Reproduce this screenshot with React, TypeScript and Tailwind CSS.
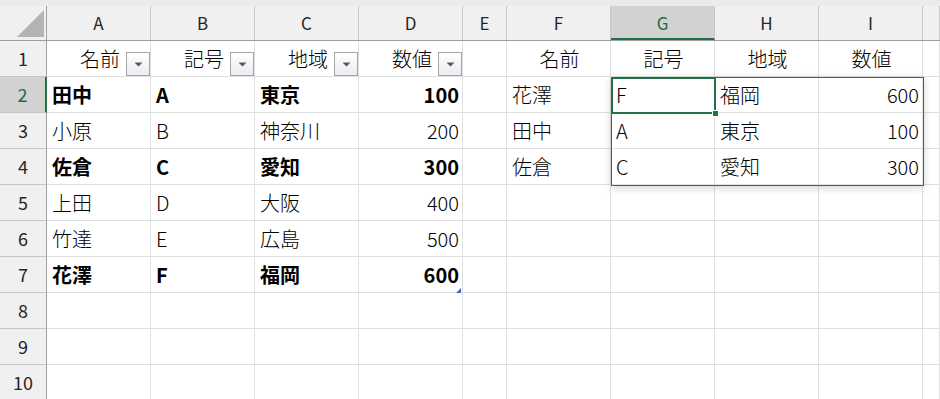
import React from "react";

const COLS = ["A", "B", "C", "D", "E", "F", "G", "H", "I", ""];
const WIDTHS = [104, 104, 104, 104, 44, 104, 104, 104, 104, 17];

type Cell = { t: string; align?: "l" | "r" | "c"; bold?: boolean; filter?: boolean };

const e: Cell = { t: "" };

const rows: Cell[][] = [
  [
    { t: "名前", align: "r", filter: true },
    { t: "記号", align: "r", filter: true },
    { t: "地域", align: "r", filter: true },
    { t: "数値", align: "r", filter: true },
    e,
    { t: "名前", align: "c" },
    { t: "記号", align: "c" },
    { t: "地域", align: "c" },
    { t: "数値", align: "c" },
    e,
  ],
  [
    { t: "田中", bold: true },
    { t: "A", bold: true },
    { t: "東京", bold: true },
    { t: "100", bold: true, align: "r" },
    e,
    { t: "花澤" },
    { t: "F" },
    { t: "福岡" },
    { t: "600", align: "r" },
    e,
  ],
  [
    { t: "小原" },
    { t: "B" },
    { t: "神奈川" },
    { t: "200", align: "r" },
    e,
    { t: "田中" },
    { t: "A" },
    { t: "東京" },
    { t: "100", align: "r" },
    e,
  ],
  [
    { t: "佐倉", bold: true },
    { t: "C", bold: true },
    { t: "愛知", bold: true },
    { t: "300", bold: true, align: "r" },
    e,
    { t: "佐倉" },
    { t: "C" },
    { t: "愛知" },
    { t: "300", align: "r" },
    e,
  ],
  [{ t: "上田" }, { t: "D" }, { t: "大阪" }, { t: "400", align: "r" }, e, e, e, e, e, e],
  [{ t: "竹達" }, { t: "E" }, { t: "広島" }, { t: "500", align: "r" }, e, e, e, e, e, e],
  [
    { t: "花澤", bold: true },
    { t: "F", bold: true },
    { t: "福岡", bold: true },
    { t: "600", bold: true, align: "r" },
    e,
    e,
    e,
    e,
    e,
    e,
  ],
  [e, e, e, e, e, e, e, e, e, e],
  [e, e, e, e, e, e, e, e, e, e],
  [e, e, e, e, e, e, e, e, e, e],
];

function FilterButton() {
  return (
    <div className="flex h-[24px] w-[24px] shrink-0 items-center justify-center border border-[#a6a6a6] bg-gradient-to-b from-[#ffffff] to-[#e9ecf0]">
      <svg width="9" height="5" viewBox="0 0 9 5">
        <path d="M0.5 0.5 L8.5 0.5 L4.5 4.5 Z" fill="#5a5a5a" />
      </svg>
    </div>
  );
}

export default function App() {
  const font = { fontFamily: '"Noto Sans CJK JP", "Noto Sans", sans-serif' };
  return (
    <div className="h-[399px] w-[940px] overflow-hidden bg-white" style={font}>
      <div className="h-[6px] bg-[#e9ecef]" />
      <div className="relative">
        {/* column header row */}
        <div className="flex h-[35px] border-b border-[#9e9e9e] bg-[#f0f0f0]">
          <div className="relative w-[47px] shrink-0 border-r border-[#a0a0a0]">
            <svg className="absolute left-[17px] top-[4px]" width="27" height="27" viewBox="0 0 27 27">
              <path d="M27 0 L27 27 L0 27 Z" fill="#b4b4b4" />
            </svg>
          </div>
          {COLS.map((c, i) => {
            const sel = c === "G";
            return (
              <div
                key={i}
                style={{ width: WIDTHS[i] }}
                className={
                  "flex shrink-0 items-center justify-center border-r border-[#c8c8c8] text-[17px] " +
                  (sel
                    ? "border-b-2 border-b-[#217346] bg-[#d2d2d2] text-[#1d6b3f]"
                    : "text-[#262626]")
                }
              >
                <span className={sel ? "mt-[2px]" : ""}>{c}</span>
              </div>
            );
          })}
        </div>
        {/* body rows */}
        {rows.map((r, ri) => {
          const selRow = ri === 1;
          return (
            <div key={ri} className="flex h-[36px]">
              <div
                className={
                  "flex w-[47px] shrink-0 items-center justify-center border-b border-[#c6c6c6] text-[18px] " +
                  (selRow
                    ? "border-r-2 border-r-[#217346] bg-[#d2d2d2] text-[#1d6b3f]"
                    : "border-r border-r-[#a0a0a0] bg-[#f0f0f0] text-[#262626]")
                }
              >
                {ri + 1}
              </div>
              {r.map((c, ci) => {
                const justify =
                  c.align === "r" ? "justify-end" : c.align === "c" ? "justify-center" : "justify-start";
                return (
                  <div
                    key={ci}
                    style={{ width: WIDTHS[ci] }}
                    className={
                      "relative flex shrink-0 items-center border-b border-r border-[#e0e0e0] text-[20px] text-black " +
                      justify +
                      (c.filter ? " pl-[5px]" : " px-[5px] pr-[3px]")
                    }
                  >
                    {c.filter ? (
                      <>
                        <span className="flex-1 pr-[6px] text-right font-light leading-none">{c.t}</span>
                        <div className="self-end">
                          <FilterButton />
                        </div>
                      </>
                    ) : (
                      <span
                        className={
                          "mt-[1px] whitespace-nowrap leading-none " + (c.bold ? "font-bold" : "font-light")
                        }
                      >
                        {c.t}
                      </span>
                    )}
                    {ri === 6 && ci === 3 && (
                      <div className="absolute bottom-[-1px] right-[1px] h-[5px] w-[5px] bg-[#4a5fc1] [clip-path:polygon(100%_0,100%_100%,0_100%)]" />
                    )}
                  </div>
                );
              })}
            </div>
          );
        })}
        {/* spill range outline G2:I4 */}
        <div className="pointer-events-none absolute left-[611px] top-[71px] h-[109px] w-[313px] border border-[#3a5ba9] shadow-[0_2px_8px_rgba(0,0,0,0.18)]" />
        {/* active cell G2 */}
        <div className="pointer-events-none absolute left-[611px] top-[71px] h-[37px] w-[105px] border-2 border-[#217346]">
          <div className="absolute bottom-[-5px] right-[-5px] h-[7px] w-[7px] border border-white bg-[#217346]" />
        </div>
      </div>
    </div>
  );
}
